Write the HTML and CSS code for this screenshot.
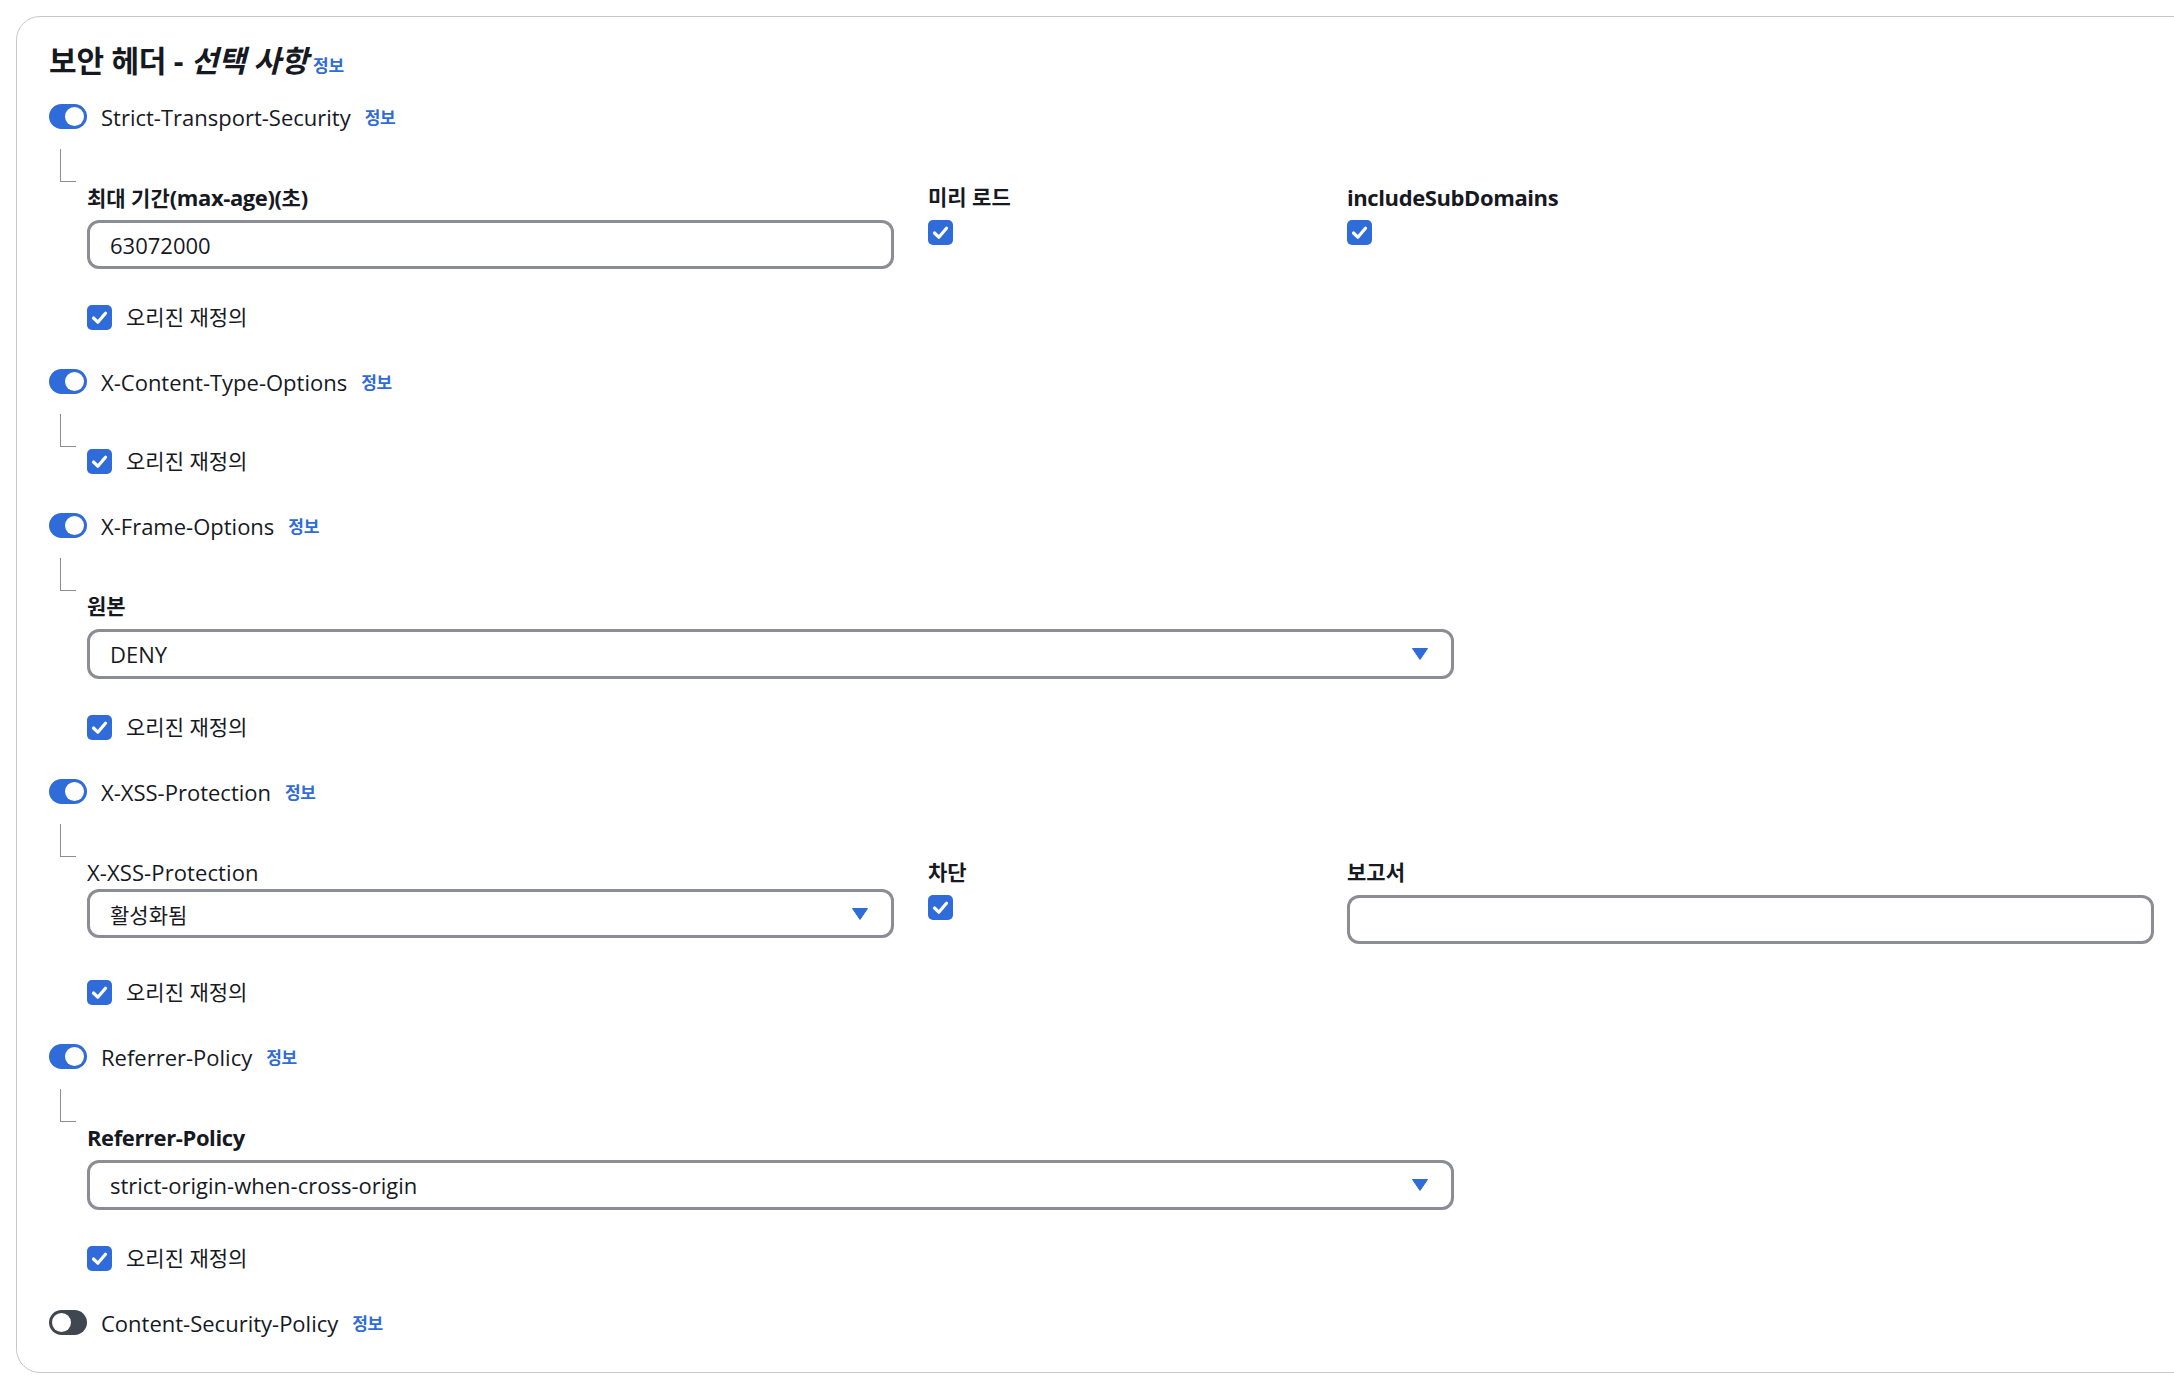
FILE: index.html
```html
<!DOCTYPE html>
<html lang="ko">
<head>
<meta charset="utf-8">
<title>보안 헤더</title>
<link rel="stylesheet" href="styles.css">
</head>
<body>
<div class="card">
  <h2 class="title"><span class="title-text">보안 헤더 - <i>선택 사항</i></span><a class="info info-title">정보</a></h2>

  <section class="sec">
    <div class="head"><span class="toggle on"></span><span class="hname">Strict-Transport-Security</span><a class="info">정보</a></div>
    <div class="tree"></div>
    <div class="body">
      <div class="grid">
        <div class="field">
          <div class="flabel"><span class="ko">최대 기간</span>(max-age)(<span class="ko">초</span>)</div>
          <div class="input">63072000</div>
        </div>
        <div class="field">
          <div class="flabel ko">미리 로드</div>
          <span class="cb cb-field"><svg viewBox="0 0 25 25" width="25" height="25"><rect width="25" height="25" rx="5" fill="#2f6bd9"/><path d="M6.5 13 L10.8 17.2 L18.5 8.3" fill="none" stroke="#fff" stroke-width="3.2" stroke-linecap="round" stroke-linejoin="round"/></svg></span>
        </div>
        <div class="field">
          <div class="flabel">includeSubDomains</div>
          <span class="cb cb-field"><svg viewBox="0 0 25 25" width="25" height="25"><rect width="25" height="25" rx="5" fill="#2f6bd9"/><path d="M6.5 13 L10.8 17.2 L18.5 8.3" fill="none" stroke="#fff" stroke-width="3.2" stroke-linecap="round" stroke-linejoin="round"/></svg></span>
        </div>
      </div>
      <div class="override after-grid"><span class="cb"><svg viewBox="0 0 25 25" width="25" height="25"><rect width="25" height="25" rx="5" fill="#2f6bd9"/><path d="M6.5 13 L10.8 17.2 L18.5 8.3" fill="none" stroke="#fff" stroke-width="3.2" stroke-linecap="round" stroke-linejoin="round"/></svg></span><span class="ko">오리진 재정의</span></div>
    </div>
  </section>

  <section class="sec">
    <div class="head"><span class="toggle on"></span><span class="hname">X-Content-Type-Options</span><a class="info">정보</a></div>
    <div class="tree"></div>
    <div class="body">
      <div class="override after-tree"><span class="cb"><svg viewBox="0 0 25 25" width="25" height="25"><rect width="25" height="25" rx="5" fill="#2f6bd9"/><path d="M6.5 13 L10.8 17.2 L18.5 8.3" fill="none" stroke="#fff" stroke-width="3.2" stroke-linecap="round" stroke-linejoin="round"/></svg></span><span class="ko">오리진 재정의</span></div>
    </div>
  </section>

  <section class="sec">
    <div class="head"><span class="toggle on"></span><span class="hname">X-Frame-Options</span><a class="info">정보</a></div>
    <div class="tree"></div>
    <div class="body">
      <div class="field wide">
        <div class="flabel ko">원본</div>
        <div class="select"><span>DENY</span><svg class="arrow" viewBox="0 0 16 12" width="16" height="12"><path d="M0.5 0.5 H15.5 L8 11.5 Z" fill="#2f6bd9" stroke="#2f6bd9" stroke-linejoin="round"/></svg></div>
      </div>
      <div class="override after-grid"><span class="cb"><svg viewBox="0 0 25 25" width="25" height="25"><rect width="25" height="25" rx="5" fill="#2f6bd9"/><path d="M6.5 13 L10.8 17.2 L18.5 8.3" fill="none" stroke="#fff" stroke-width="3.2" stroke-linecap="round" stroke-linejoin="round"/></svg></span><span class="ko">오리진 재정의</span></div>
    </div>
  </section>

  <section class="sec">
    <div class="head"><span class="toggle on"></span><span class="hname">X-XSS-Protection</span><a class="info">정보</a></div>
    <div class="tree"></div>
    <div class="body">
      <div class="grid">
        <div class="field">
          <div class="flabel regular">X-XSS-Protection</div>
          <div class="select tight"><span class="ko">활성화됨</span><svg class="arrow" viewBox="0 0 16 12" width="16" height="12"><path d="M0.5 0.5 H15.5 L8 11.5 Z" fill="#2f6bd9" stroke="#2f6bd9" stroke-linejoin="round"/></svg></div>
        </div>
        <div class="field">
          <div class="flabel ko">차단</div>
          <span class="cb cb-field"><svg viewBox="0 0 25 25" width="25" height="25"><rect width="25" height="25" rx="5" fill="#2f6bd9"/><path d="M6.5 13 L10.8 17.2 L18.5 8.3" fill="none" stroke="#fff" stroke-width="3.2" stroke-linecap="round" stroke-linejoin="round"/></svg></span>
        </div>
        <div class="field">
          <div class="flabel ko">보고서</div>
          <div class="input empty"></div>
        </div>
      </div>
      <div class="override after-grid"><span class="cb"><svg viewBox="0 0 25 25" width="25" height="25"><rect width="25" height="25" rx="5" fill="#2f6bd9"/><path d="M6.5 13 L10.8 17.2 L18.5 8.3" fill="none" stroke="#fff" stroke-width="3.2" stroke-linecap="round" stroke-linejoin="round"/></svg></span><span class="ko">오리진 재정의</span></div>
    </div>
  </section>

  <section class="sec">
    <div class="head"><span class="toggle on"></span><span class="hname">Referrer-Policy</span><a class="info">정보</a></div>
    <div class="tree"></div>
    <div class="body">
      <div class="field wide">
        <div class="flabel">Referrer-Policy</div>
        <div class="select"><span>strict-origin-when-cross-origin</span><svg class="arrow" viewBox="0 0 16 12" width="16" height="12"><path d="M0.5 0.5 H15.5 L8 11.5 Z" fill="#2f6bd9" stroke="#2f6bd9" stroke-linejoin="round"/></svg></div>
      </div>
      <div class="override after-grid"><span class="cb"><svg viewBox="0 0 25 25" width="25" height="25"><rect width="25" height="25" rx="5" fill="#2f6bd9"/><path d="M6.5 13 L10.8 17.2 L18.5 8.3" fill="none" stroke="#fff" stroke-width="3.2" stroke-linecap="round" stroke-linejoin="round"/></svg></span><span class="ko">오리진 재정의</span></div>
    </div>
  </section>

  <section class="sec">
    <div class="head"><span class="toggle"></span><span class="hname">Content-Security-Policy</span><a class="info">정보</a></div>
  </section>
</div>
</body>
</html>
```

FILE: styles.css
```css
html, body {
  margin: 0;
  padding: 0;
  background: #ffffff;
}
body {
  overflow: hidden;
  font-family: "Open Sans", "Noto Sans CJK KR", sans-serif;
  font-size: 22px;
  color: #16191f;
}
.card {
  margin: 16px -80px 0 16px;
  border: 1px solid #c6c6cd;
  border-radius: 24px;
  padding: 26px 32px 34px 32px;
}
.title {
  margin: 0;
  display: flex;
  align-items: baseline;
  gap: 5px;
  height: 36px;
  line-height: 36px;
  font-weight: 700;
}
.title-text {
  font-size: 30px;
  letter-spacing: -0.2px;
}
.title-text i {
  font-style: italic;
}
.info {
  color: #2f6bd9;
  font-size: 17px;
  font-weight: 700;
  letter-spacing: -0.3px;
  font-family: "Noto Sans CJK KR", "Open Sans", sans-serif;
}
.sec {
  margin-top: 36.5px;
}
.title + .sec {
  margin-top: 22.5px;
}
.head {
  display: flex;
  align-items: center;
  height: 30px;
}
.toggle {
  position: relative;
  width: 38px;
  height: 25px;
  border-radius: 13px;
  background: #414750;
  flex: none;
  margin-right: 14px;
}
.toggle::after {
  content: "";
  position: absolute;
  top: 3px;
  left: 3px;
  width: 19px;
  height: 19px;
  border-radius: 50%;
  background: #ffffff;
}
.toggle.on {
  background: #2f6bd9;
}
.toggle.on::after {
  left: 16px;
}
.hname {
  margin-right: 14px;
  line-height: 30px;
}
.tree {
  margin: 17.5px 0 0 11px;
  width: 15px;
  height: 32px;
  border-left: 1px solid #8c8c94;
  border-bottom: 1px solid #8c8c94;
}
.body {
  padding-left: 38px;
}
.ko {
  font-size: 21px;
  letter-spacing: 0;
}
.grid {
  display: grid;
  grid-template-columns: 807px 385px 807px;
  column-gap: 34px;
}
.field.wide {
  width: 1367px;
}
.flabel {
  font-weight: 700;
  line-height: 30px;
  height: 30px;
  margin-bottom: 8px;
  letter-spacing: -0.4px;
}
.flabel .ko {
  letter-spacing: 0;
}
.flabel.regular {
  font-weight: 400;
  letter-spacing: 0.1px;
}
.flabel.ko {
  font-size: 21px;
  letter-spacing: 0;
}
.input, .select {
  box-sizing: border-box;
  height: 49px;
  border: 3px solid #8c8c94;
  border-radius: 12px;
  padding: 0 23px 0 20px;
  display: flex;
  align-items: center;
  background: #ffffff;
}
.select {
  height: 50px;
  justify-content: space-between;
}
.select.tight {
  margin-top: -6px;
  height: 49px;
}
.arrow {
  display: block;
  flex: none;
}
.cb {
  display: block;
  width: 25px;
  height: 25px;
  flex: none;
}
.cb svg {
  display: block;
}
.cb-field {
  margin-top: 3px;
}
.override {
  display: flex;
  align-items: center;
  gap: 14px;
  height: 25px;
  line-height: 25px;
}
.after-grid {
  margin-top: 36px;
}
.after-tree {
  margin-top: 2px;
}
```
